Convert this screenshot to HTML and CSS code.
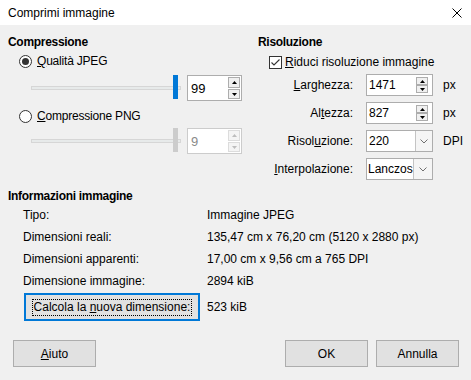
FILE: index.html
```html
<!DOCTYPE html>
<html lang="it">
<head>
<meta charset="utf-8">
<title>Comprimi immagine</title>
<link rel="stylesheet" href="styles.css">
</head>
<body>
<div class="titlebar">
  <span class="title">Comprimi immagine</span>
  <svg class="close" width="10" height="10" viewBox="0 0 10 10"><path d="M0.5 0.5 L9.5 9.5 M9.5 0.5 L0.5 9.5" stroke="#000" stroke-width="1" fill="none"/></svg>
</div>
<div class="content">
  <div class="top">
    <div class="col-left">
      <div class="heading">Compressione</div>
      <div class="radio-row"><span class="radio checked"></span><span><u>Q</u>ualità JPEG</span></div>
      <div class="slider-row">
        <div class="slider"><div class="track"></div><div class="thumb"></div></div>
        <div class="spin spin-lg">
          <span class="val">99</span>
          <div class="spin-btns">
            <span class="sb"><svg width="5" height="3" viewBox="0 0 5 3"><path d="M2.5 0 L5 3 L0 3 Z" fill="#000"/></svg></span>
            <span class="sb"><svg width="5" height="3" viewBox="0 0 5 3"><path d="M0 0 L5 0 L2.5 3 Z" fill="#000"/></svg></span>
          </div>
        </div>
      </div>
      <div class="radio-row second"><span class="radio"></span><span><u>C</u>ompressione PNG</span></div>
      <div class="slider-row second disabled">
        <div class="slider"><div class="track"></div><div class="thumb"></div></div>
        <div class="spin spin-lg">
          <span class="val">9</span>
          <div class="spin-btns">
            <span class="sb"><svg width="5" height="3" viewBox="0 0 5 3"><path d="M2.5 0 L5 3 L0 3 Z" fill="#bdbdbd"/></svg></span>
            <span class="sb"><svg width="5" height="3" viewBox="0 0 5 3"><path d="M0 0 L5 0 L2.5 3 Z" fill="#bdbdbd"/></svg></span>
          </div>
        </div>
      </div>
    </div>
    <div class="col-right">
      <div class="heading">Risoluzione</div>
      <div class="check-row">
        <span class="checkbox"><svg width="11" height="11" viewBox="0 0 11 11"><path d="M1.5 5.5 L4 8 L9.5 2.5" stroke="#333" stroke-width="1.1" fill="none"/></svg></span>
        <span><u>R</u>iduci risoluzione immagine</span>
      </div>
      <div class="form">
        <span class="lbl"><u>L</u>arghezza:</span>
        <div class="spin spin-sm">
          <span class="val">1471</span>
          <div class="spin-btns">
            <span class="sb"><svg width="5" height="3" viewBox="0 0 5 3"><path d="M2.5 0 L5 3 L0 3 Z" fill="#000"/></svg></span>
            <span class="sb"><svg width="5" height="3" viewBox="0 0 5 3"><path d="M0 0 L5 0 L2.5 3 Z" fill="#000"/></svg></span>
          </div>
        </div>
        <span class="unit">px</span>

        <span class="lbl">Al<u>t</u>ezza:</span>
        <div class="spin spin-sm">
          <span class="val">827</span>
          <div class="spin-btns">
            <span class="sb"><svg width="5" height="3" viewBox="0 0 5 3"><path d="M2.5 0 L5 3 L0 3 Z" fill="#000"/></svg></span>
            <span class="sb"><svg width="5" height="3" viewBox="0 0 5 3"><path d="M0 0 L5 0 L2.5 3 Z" fill="#000"/></svg></span>
          </div>
        </div>
        <span class="unit">px</span>

        <span class="lbl">Risol<u>u</u>zione:</span>
        <div class="combo">
          <span class="val">220</span>
          <span class="drop"><svg width="8" height="5" viewBox="0 0 8 5"><path d="M0.5 0.5 L4 4 L7.5 0.5" stroke="#707070" stroke-width="1" fill="none"/></svg></span>
        </div>
        <span class="unit">DPI</span>

        <span class="lbl"><u>I</u>nterpolazione:</span>
        <div class="combo combo-narrow">
          <span class="val">Lanczos</span>
          <span class="drop"><svg width="8" height="5" viewBox="0 0 8 5"><path d="M0.5 0.5 L4 4 L7.5 0.5" stroke="#707070" stroke-width="1" fill="none"/></svg></span>
        </div>
        <span class="unit"></span>
      </div>
    </div>
  </div>

  <div class="heading info-heading">Informazioni immagine</div>
  <div class="info-grid">
    <span>Tipo:</span><span>Immagine JPEG</span>
    <span>Dimensioni reali:</span><span>135,47 cm x 76,20 cm (5120 x 2880 px)</span>
    <span>Dimensioni apparenti:</span><span>17,00 cm x 9,56 cm a 765 DPI</span>
    <span>Dimensione immagine:</span><span>2894 kiB</span>
    <div class="calc-btn"><span class="focus">Calcola la <u>n</u>uova dimensione:</span></div><span class="calc-val">523 kiB</span>
  </div>

  <div class="footer">
    <div class="btn"><span><u>A</u>iuto</span></div>
    <div class="btn btn-ok">OK</div>
    <div class="btn">Annulla</div>
  </div>
</div>
</body>
</html>
```

FILE: styles.css
```css
* { box-sizing: border-box; }
html, body { margin: 0; padding: 0; }
body {
  width: 471px;
  height: 380px;
  overflow: hidden;
  background: #f0f0f0;
  color: #000;
  font-family: "Liberation Sans", Arial, sans-serif;
  font-size: 12px;
}
u { text-decoration: underline; text-underline-offset: 1px; }

.titlebar {
  height: 25px;
  background: #fff;
  display: flex;
  align-items: center;
  justify-content: space-between;
  padding: 0 9px 0 8px;
}
.title { line-height: 16px; }
.close { display: block; }

.content { padding: 9px 8px 0 8px; }
.top { display: flex; }
.col-left { width: 250px; flex: none; }
.col-right { flex: 1; min-width: 0; }

.heading {
  font-weight: bold;
  height: 16px;
  line-height: 16px;
  letter-spacing: -0.3px;
}

.radio-row {
  display: flex;
  align-items: center;
  gap: 5px;
  height: 20px;
  margin-top: 1px;
  padding-left: 11px;
  letter-spacing: -0.2px;
}
.radio-row.second { margin-top: 5px; }
.radio {
  width: 13px;
  height: 13px;
  border: 1px solid #333;
  border-radius: 50%;
  background: #fff;
  display: flex;
  align-items: center;
  justify-content: center;
}
.radio.checked::after {
  content: "";
  width: 7px;
  height: 7px;
  border-radius: 50%;
  background: #333;
}

.slider-row {
  display: flex;
  height: 26px;
  margin-top: 4px;
  padding-left: 23px;
}
.slider-row.second { margin-top: 2px; }
.slider { width: 150px; position: relative; }
.track {
  margin-top: 11px;
  height: 4px;
  background: #e7eaea;
  border: 1px solid #d6d6d6;
}
.thumb {
  position: absolute;
  left: 142px;
  top: 0;
  width: 5px;
  height: 24px;
  background: #0078d7;
}
.disabled .thumb { background: #cccccc; }

.spin {
  display: flex;
  align-items: center;
  background: #fff;
  border: 1px solid #adadad;
}
.val { flex: 1; white-space: nowrap; }
.spin-btns { display: flex; flex-direction: column; }
.sb {
  display: flex;
  align-items: center;
  justify-content: center;
  background: #f0f0f0;
  border: 1px solid #adadad;
}
.sb svg { display: block; }

.spin-lg {
  width: 55px;
  height: 26px;
  margin-left: 6px;
  padding: 0 1px 0 3px;
  font-size: 13px;
}
.spin-lg .spin-btns { width: 12px; height: 24px; padding: 1px 0; gap: 1px; }
.spin-lg .sb:first-child { height: 11px; }
.spin-lg .sb:last-child { height: 10px; }

.disabled .spin { border-color: #cccccc; color: #8a8a8a; }
.disabled .sb { border-color: #dcdcdc; background: #f4f4f4; }

.check-row {
  display: flex;
  align-items: center;
  gap: 3px;
  height: 20px;
  margin-top: 2px;
  padding-left: 11px;
}
.checkbox {
  width: 13px;
  height: 13px;
  border: 1px solid #333;
  background: #fff;
  display: flex;
  align-items: center;
  justify-content: center;
}
.checkbox svg { display: block; }

.form {
  display: grid;
  grid-template-columns: 108px 67px auto;
  grid-auto-rows: 22px;
  row-gap: 6px;
  margin-top: 2px;
  align-items: center;
}
.lbl { text-align: right; padding-right: 13px; white-space: nowrap; }
.unit { padding-left: 10px; white-space: nowrap; }

.spin-sm {
  width: 67px;
  height: 22px;
  padding: 0 4px 0 2px;
}
.spin-sm .spin-btns { width: 12px; gap: 0; }
.spin-sm .sb { height: 8px; }

.combo {
  width: 67px;
  height: 22px;
  display: flex;
  align-items: stretch;
  background: #fff;
  border: 1px solid #adadad;
}
.combo .val { padding-left: 2px; display: flex; align-items: center; }
.drop {
  width: 17px;
  display: flex;
  align-items: center;
  justify-content: center;
  background: #f5f5f5;
  border-left: 1px solid #c4c4c4;
}
.combo-narrow .drop { width: 25px; }
.combo-narrow .val { padding-left: 1px; }

.info-heading { margin-top: 8px; }
.info-grid {
  display: grid;
  grid-template-columns: 184px auto;
  grid-template-rows: repeat(4, 22px) 29px;
  align-items: center;
  padding-left: 15px;
}
.calc-btn {
  align-self: end;
  margin-left: 1px;
  width: 176px;
  height: 28px;
  border: 2px solid #0078d7;
  background: #e1e1e1;
  display: flex;
  align-items: center;
  justify-content: center;
}
.focus {
  border: 1px dotted #000;
  padding: 1px;
  line-height: 13px;
  white-space: nowrap;
}
.calc-val { align-self: end; line-height: 28px; }

.footer {
  display: flex;
  gap: 8px;
  margin-top: 19px;
  padding: 0 4px 0 5px;
}
.btn {
  width: 83px;
  height: 27px;
  border: 1px solid #adadad;
  background: #e1e1e1;
  display: flex;
  align-items: center;
  justify-content: center;
}
.btn-ok { margin-left: auto; }
```
